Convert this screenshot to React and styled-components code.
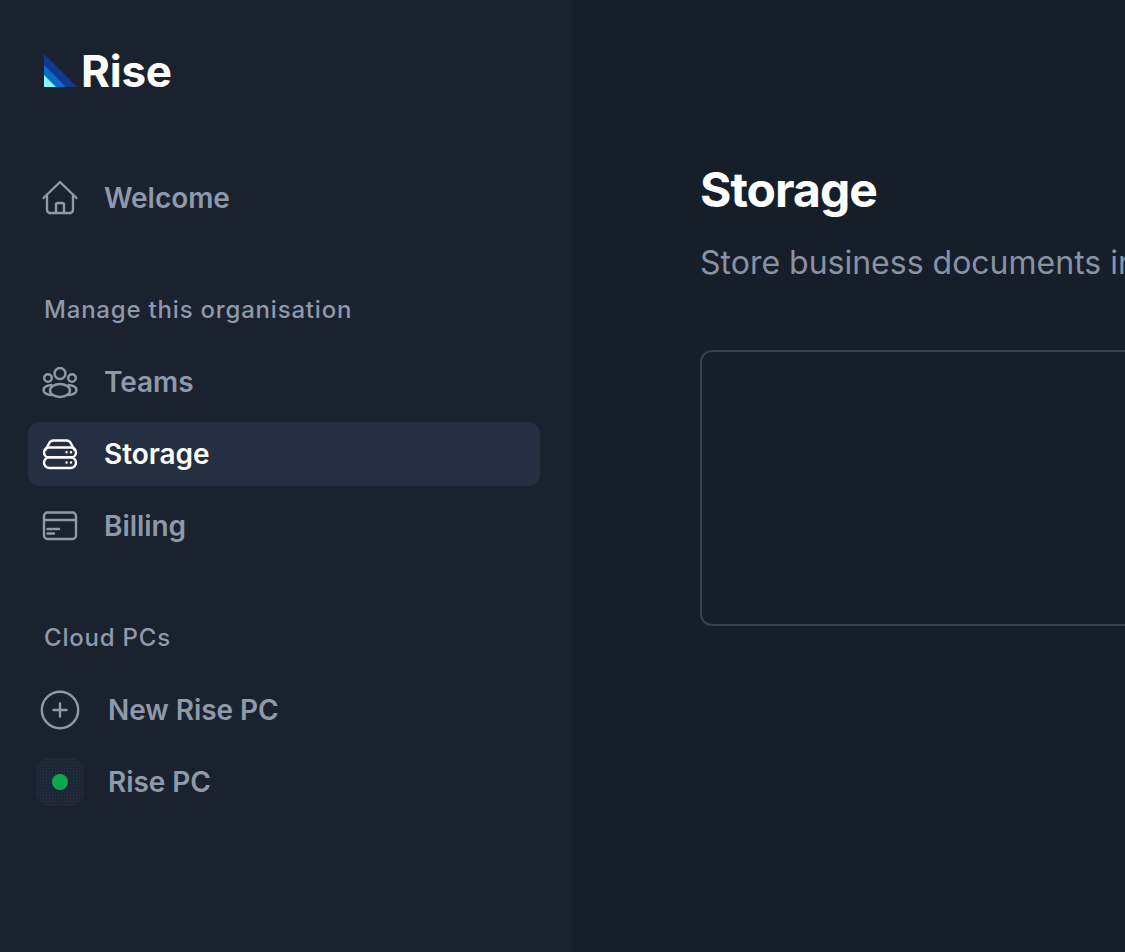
import React from 'react'
import styled, { createGlobalStyle } from 'styled-components'

const GlobalStyle = createGlobalStyle`
  html, body {
    margin: 0;
    height: 100%;
    overflow: hidden;
    background: #161e29;
  }
  body {
    font-family: Inter, "Noto Sans", sans-serif;
  }
`

const Page = styled.div`
  display: flex;
  width: 1125px;
  height: 952px;
  overflow: hidden;
  opacity: 0.999;
`

const Sidebar = styled.aside`
  flex: 0 0 572px;
  box-sizing: border-box;
  padding: 48px 32px 0 28px;
  background: #1a222f;
  display: flex;
  flex-direction: column;
`

const Brand = styled.div`
  display: flex;
  align-items: center;
  gap: 3px;
  height: 46px;
  padding-left: 16px;
  margin-bottom: 72px;
`

const BrandName = styled.span`
  font-size: 44px;
  line-height: 46px;
  font-weight: 700;
  letter-spacing: -0.2px;
  color: #fff;
`

const Section = styled.div`
  display: flex;
  flex-direction: column;
  gap: 8px;
  margin-bottom: ${props => props.$gap}px;
`

const SectionTitle = styled.h2`
  margin: 0 0 14px;
  padding-left: 16px;
  height: 36px;
  font-size: 24px;
  line-height: 36px;
  font-weight: 500;
  letter-spacing: 0.8px;
  color: #8e99aa;
`

const NavItem = styled.div`
  display: flex;
  align-items: center;
  gap: ${props => props.$gap || 26}px;
  height: 64px;
  padding-left: ${props => props.$inset || 14}px;
  border-radius: 12px;
  font-size: 28px;
  font-weight: 600;
  letter-spacing: -0.05px;
  color: ${props => (props.$active ? '#fff' : '#8e99aa')};
  background: ${props => (props.$active ? '#242f41' : 'transparent')};
`

const StatusTile = styled.span`
  display: flex;
  align-items: center;
  justify-content: center;
  width: 48px;
  height: 48px;
  border-radius: 14px;
  background-color: #1d2635;
  background-image: radial-gradient(#283347 0.6px, transparent 0.8px);
  background-size: 3px 3px;
`

const StatusDot = styled.span`
  width: 16px;
  height: 16px;
  border-radius: 50%;
  background: #0ea84c;
`

const Main = styled.main`
  flex: 1;
  min-width: 0;
  padding: 159px 0 0 128px;
  background: #161e29;
`

const Title = styled.h1`
  margin: 0;
  font-size: 48px;
  line-height: 62px;
  font-weight: 700;
  letter-spacing: -0.96px;
  color: #fff;
`

const Subtitle = styled.p`
  margin: 18px 0 0;
  font-size: 32px;
  line-height: 48px;
  font-weight: 400;
  white-space: nowrap;
  color: #8793a5;
`

const Panel = styled.div`
  box-sizing: border-box;
  width: 900px;
  height: 276px;
  margin-top: 63px;
  border: 2px solid #36414f;
  border-radius: 12px;
`

const Svg = styled.svg`
  flex: none;
  display: block;
`

const Logo = () => (
  <Svg width="34" height="34" viewBox="0 0 34 34">
    <path d="M0 0 L33 33 L0 33 Z" fill="#12398f" />
    <path d="M0 11 L22 33 L0 33 Z" fill="#0a6cc4" />
    <path d="M0 21 L12 33 L0 33 Z" fill="#86f3f7" />
  </Svg>
)

const Icon = ({ children }) => (
  <Svg
    width="36"
    height="36"
    viewBox="0 0 36 36"
    fill="none"
    stroke="currentColor"
    strokeWidth="2.4"
    strokeLinecap="round"
    strokeLinejoin="round"
  >
    {children}
  </Svg>
)

const HomeIcon = () => (
  <Icon>
    <path d="M1.5 18 L18 2 L34.5 18" />
    <path d="M5 15 V30 a3 3 0 0 0 3 3 H28 a3 3 0 0 0 3 -3 V15" />
    <path d="M14 33 V25 a2 2 0 0 1 2 -2 H20 a2 2 0 0 1 2 2 V33" />
  </Icon>
)

const TeamsIcon = () => (
  <Icon>
    <circle cx="18" cy="9.5" r="5.5" />
    <circle cx="6" cy="14" r="3.8" />
    <circle cx="30" cy="14" r="3.8" />
    <path d="M18 20 c-5.5 0 -10 3 -10 6.5 s4.5 6.5 10 6.5 s10 -3 10 -6.5 s-4.5 -6.5 -10 -6.5 Z" />
    <path d="M9.5 21 C4.5 21.5 1.5 23.5 1.5 26 C1.5 28.5 5 30.5 9.5 31" />
    <path d="M26.5 21 C31.5 21.5 34.5 23.5 34.5 26 C34.5 28.5 31 30.5 26.5 31" />
  </Icon>
)

const StorageIcon = () => (
  <Icon>
    <path d="M3.5 14 L7 7.5 C8 5.5 9.5 4.5 11.5 4.5 H24.5 C26.5 4.5 28 5.5 29 7.5 L32.5 14" />
    <rect x="2" y="11.5" width="32" height="9.75" rx="4.87" />
    <rect x="2" y="21.25" width="32" height="10.75" rx="5.37" />
    <path d="M24.5 16.2 h0.1 M29 16.2 h0.1 M24.5 26.5 h0.1 M29 26.5 h0.1" />
  </Icon>
)

const BillingIcon = () => (
  <Icon>
    <rect x="2" y="4.5" width="32" height="26.5" rx="3.5" />
    <path d="M2 12 H34" />
    <path d="M5.5 21 H17 M5.5 25.5 H12" />
  </Icon>
)

const PlusIcon = () => (
  <Svg width="40" height="40" viewBox="0 0 40 40" fill="none" stroke="currentColor" strokeWidth="2.4" strokeLinecap="round">
    <circle cx="20" cy="20" r="18.2" />
    <path d="M20 13.5 V26.5 M13.5 20 H26.5" />
  </Svg>
)

export default function App() {
  return (
    <Page>
      <GlobalStyle />
      <Sidebar>
        <Brand>
          <Logo />
          <BrandName>Rise</BrandName>
        </Brand>
        <Section $gap={62}>
          <NavItem><HomeIcon />Welcome</NavItem>
        </Section>
        <Section $gap={62}>
          <SectionTitle>Manage this organisation</SectionTitle>
          <NavItem><TeamsIcon />Teams</NavItem>
          <NavItem $active><StorageIcon />Storage</NavItem>
          <NavItem><BillingIcon />Billing</NavItem>
        </Section>
        <Section $gap={0}>
          <SectionTitle>Cloud PCs</SectionTitle>
          <NavItem $inset={12} $gap={28}><PlusIcon />New Rise PC</NavItem>
          <NavItem $inset={8} $gap={24}><StatusTile><StatusDot /></StatusTile>Rise PC</NavItem>
        </Section>
      </Sidebar>
      <Main>
        <Title>Storage</Title>
        <Subtitle>Store business documents in one secure place</Subtitle>
        <Panel />
      </Main>
    </Page>
  )
}
